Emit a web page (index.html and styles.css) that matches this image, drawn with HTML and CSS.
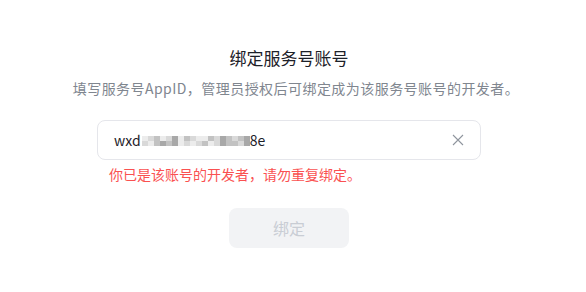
FILE: index.html
```html
<!DOCTYPE html>
<html lang="zh-CN">
<head>
<meta charset="utf-8">
<title>绑定服务号账号</title>
<link rel="stylesheet" href="styles.css">
</head>
<body>
<div class="page">
  <h1 class="title">绑定服务号账号</h1>
  <p class="desc">填写服务号AppID，管理员授权后可绑定成为该服务号账号的开发者。</p>
  <div class="field">
    <div class="input">
      <span class="value">wxd<span class="mosaic"><i class="c1"></i><i class="c2"></i><i class="c3"></i><i class="c1"></i><i class="c2"></i><i class="c4"></i><i class="c1"></i><i class="c3"></i><i class="c2"></i><i class="c1"></i><i class="c1"></i><i class="c3"></i><i class="c2"></i><i class="c4"></i><i class="c3"></i><i class="c2"></i><i class="c3"></i><i class="c4"></i><i class="c2"></i><i class="c1"></i><i class="c3"></i><i class="c4"></i><i class="c3"></i><i class="c4"></i><i class="c1"></i><i class="c2"></i><i class="c1"></i><i class="c2"></i><i class="c3"></i><i class="c1"></i><i class="c2"></i><i class="c4"></i><i class="c3"></i><i class="c3"></i><i class="c2"></i><i class="c4"></i></span>8e</span>
      <svg class="clear" width="12" height="12" viewBox="0 0 12 12"><path d="M1 1L11 11M11 1L1 11" stroke="#8f959e" stroke-width="1.1" fill="none"/></svg>
    </div>
    <div class="error">你已是该账号的开发者，请勿重复绑定。</div>
  </div>
  <button class="btn" disabled>绑定</button>
</div>
</body>
</html>
```

FILE: styles.css
```css
html, body {
  margin: 0;
  padding: 0;
  background: #ffffff;
}
body {
  font-family: "Noto Sans CJK SC", "Microsoft YaHei", "Noto Sans", sans-serif;
  width: 586px;
  height: 292px;
  overflow: hidden;
}
.page {
  width: 578px;
  display: flex;
  flex-direction: column;
  align-items: center;
  padding-top: 46px;
}
.title {
  margin: 0;
  font-size: 17px;
  font-weight: 400;
  line-height: 24px;
  color: #1d2129;
}
.desc {
  margin: 7px 0 0;
  padding-left: 14px;
  font-size: 14px;
  line-height: 22px;
  color: #80868f;
  letter-spacing: 0.45px;
}
.field {
  margin-top: 21px;
  width: 384px;
}
.input {
  box-sizing: border-box;
  height: 40px;
  border: 1px solid #e5e6eb;
  border-radius: 8px;
  display: flex;
  align-items: center;
  justify-content: space-between;
  padding: 0 16px 0 16px;
}
.value {
  font-size: 14px;
  color: #1d2129;
  line-height: 20px;
  display: flex;
  align-items: center;
}
.mosaic {
  display: inline-grid;
  grid-template-columns: repeat(18, 6px);
  grid-auto-rows: 5px;
  margin: 2px 0 0 1px;
}
.mosaic i { display: block; }
.c1 { background: #ececec; }
.c2 { background: #d9d9d9; }
.c3 { background: #c2c2c2; }
.c4 { background: #a8a8a8; }
.clear {
  display: block;
}
.error {
  margin-top: 4px;
  padding-left: 12px;
  font-size: 14px;
  line-height: 20px;
  color: #fa5151;
}
.btn {
  margin-top: 24px;
  width: 120px;
  height: 40px;
  border: 0;
  border-radius: 8px;
  background: #f2f3f5;
  color: #c9cdd4;
  font-family: inherit;
  font-size: 16px;
  padding: 0;
}
```
